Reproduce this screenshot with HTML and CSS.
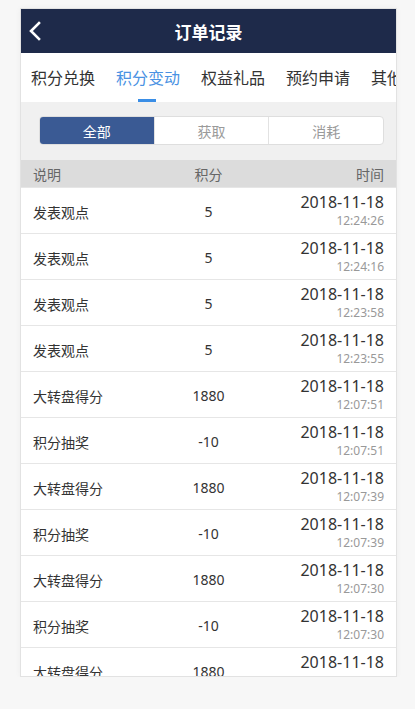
FILE: index.html
```html
<!DOCTYPE html>
<html lang="zh-CN">
<head>
<meta charset="utf-8">
<title>订单记录</title>
<link rel="stylesheet" href="styles.css">
</head>
<body>
<div class="phone">
  <header class="topbar">
    <span class="back">
      <svg width="14" height="20" viewBox="0 0 14 20"><path d="M11 2 L3 10 L11 18" fill="none" stroke="#fff" stroke-width="2.6" stroke-linecap="square" stroke-linejoin="miter"/></svg>
    </span>
    <h1 class="title">订单记录</h1>
  </header>
  <nav class="tabs">
    <span class="tab">积分兑换</span>
    <span class="tab active">积分变动</span>
    <span class="tab">权益礼品</span>
    <span class="tab">预约申请</span>
    <span class="tab">其他</span>
  </nav>
  <div class="filter">
    <div class="seg">
      <span class="seg-item on">全部</span>
      <span class="seg-item">获取</span>
      <span class="seg-item">消耗</span>
    </div>
  </div>
  <div class="thead">
    <span class="c1">说明</span><span class="c2">积分</span><span class="c3">时间</span>
  </div>
  <div class="list">
    <div class="row"><span class="c1">发表观点</span><span class="c2">5</span><span class="c3"><span class="date">2018-11-18</span><span class="time">12:24:26</span></span></div>
    <div class="row"><span class="c1">发表观点</span><span class="c2">5</span><span class="c3"><span class="date">2018-11-18</span><span class="time">12:24:16</span></span></div>
    <div class="row"><span class="c1">发表观点</span><span class="c2">5</span><span class="c3"><span class="date">2018-11-18</span><span class="time">12:23:58</span></span></div>
    <div class="row"><span class="c1">发表观点</span><span class="c2">5</span><span class="c3"><span class="date">2018-11-18</span><span class="time">12:23:55</span></span></div>
    <div class="row"><span class="c1">大转盘得分</span><span class="c2">1880</span><span class="c3"><span class="date">2018-11-18</span><span class="time">12:07:51</span></span></div>
    <div class="row"><span class="c1">积分抽奖</span><span class="c2">-10</span><span class="c3"><span class="date">2018-11-18</span><span class="time">12:07:51</span></span></div>
    <div class="row"><span class="c1">大转盘得分</span><span class="c2">1880</span><span class="c3"><span class="date">2018-11-18</span><span class="time">12:07:39</span></span></div>
    <div class="row"><span class="c1">积分抽奖</span><span class="c2">-10</span><span class="c3"><span class="date">2018-11-18</span><span class="time">12:07:39</span></span></div>
    <div class="row"><span class="c1">大转盘得分</span><span class="c2">1880</span><span class="c3"><span class="date">2018-11-18</span><span class="time">12:07:30</span></span></div>
    <div class="row"><span class="c1">积分抽奖</span><span class="c2">-10</span><span class="c3"><span class="date">2018-11-18</span><span class="time">12:07:30</span></span></div>
    <div class="row"><span class="c1">大转盘得分</span><span class="c2">1880</span><span class="c3"><span class="date">2018-11-18</span><span class="time">12:07:30</span></span></div>
  </div>
</div>
</body>
</html>
```
FILE: styles.css
```css
* { box-sizing: border-box; }
html, body { margin: 0; padding: 0; }
body {
  background: #f7f7f7;
  font-family: "Noto Sans", "Noto Sans CJK SC", sans-serif;
  color: #333;
}
.phone {
  margin: 8px 0 0 20px;
  width: 377px;
  height: 669px;
  border: 1px solid #e2e2e2;
  background: #fff;
  overflow: hidden;
  box-shadow: 0 0 6px rgba(0,0,0,0.04);
}
.topbar {
  height: 44px;
  background: #1e2a4a;
  display: flex;
  align-items: center;
  justify-content: center;
  position: relative;
}
.back {
  position: absolute;
  left: 7px;
  top: 12px;
  display: flex;
}
.title {
  margin: 0;
  color: #fff;
  font-size: 17px;
  font-weight: bold;
  font-family: "Noto Sans CJK SC", sans-serif;
  letter-spacing: 0;
}
.tabs {
  height: 49px;
  display: flex;
  align-items: center;
  gap: 21px;
  padding-left: 10px;
  white-space: nowrap;
  overflow: hidden;
  background: #fff;
  font-family: "Noto Sans CJK SC", sans-serif;
}
.tab {
  font-size: 16px;
  color: #333;
  flex: none;
  position: relative;
  height: 49px;
  line-height: 49px;
}
.tab.active { color: #4a92e3; }
.tab.active::after {
  content: "";
  position: absolute;
  left: 22px;
  bottom: 0;
  width: 18px;
  height: 3px;
  background: #3a8ee6;
}
.filter {
  background: #f0f0f0;
  padding: 14px 0 15px 18px;
}
.seg {
  width: 345px;
  height: 29px;
  display: flex;
  border: 1px solid #dedede;
  border-radius: 4px;
  overflow: hidden;
  background: #fff;
  font-family: "Noto Sans CJK SC", sans-serif;
}
.seg-item {
  flex: 1;
  display: flex;
  align-items: center;
  justify-content: center;
  font-size: 14px;
  color: #9a9a9a;
  border-left: 1px solid #e2e2e2;
}
.seg-item:first-child { border-left: none; }
.seg-item.on {
  background: #3a5a94;
  color: #fff;
}
.thead, .row {
  display: grid;
  grid-template-columns: 1fr 1fr 1fr;
  align-items: center;
  padding: 0 12px 0 12px;
}
.thead {
  height: 28px;
  background: #dcdcdc;
  border-bottom: 1px solid #e6e6e6;
  font-size: 14px;
  color: #666;
  font-family: "Noto Sans CJK SC", sans-serif;
}
.c1 { text-align: left; }
.c2 { text-align: center; }
.c3 { text-align: right; }
.row {
  height: 46px;
  border-bottom: 1px solid #e6e6e6;
  font-size: 14px;
}
.row .c1 { font-family: "Noto Sans CJK SC", sans-serif; color: #333; padding-top: 2px; }
.row .c2 { color: #333; padding-top: 2px; }
.row .c3 { display: flex; flex-direction: column; align-items: flex-end; }
.date { font-size: 16px; line-height: 21px; color: #333; }
.time { font-size: 12px; line-height: 16px; color: #999; }
```
